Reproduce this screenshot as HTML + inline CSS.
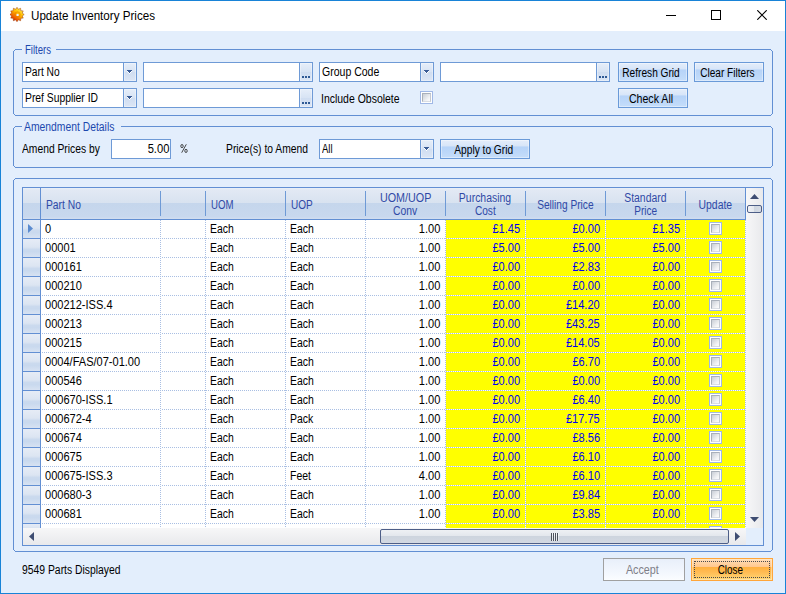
<!DOCTYPE html><html><head><meta charset="utf-8"><style>
*{box-sizing:border-box;margin:0;padding:0}
html,body{width:786px;height:594px;overflow:hidden;background:#E3EEFC}
body{position:relative;font-family:"Liberation Sans",sans-serif;font-size:12px;color:#000}
.a{position:absolute}
.t{position:absolute;white-space:nowrap;line-height:14px;font-size:12px}
.tb{position:absolute;background:#fff;border:1px solid #6E9AD6}
.dd{position:absolute;background:linear-gradient(#E6EEF9,#D7E3F4 50%,#CFDDF1 51%,#DCE6F5);box-shadow:inset 0 0 0 1px rgba(255,255,255,0.35)}
.btn{position:absolute;border:1px solid #6A9AD8;background:linear-gradient(#E4EDFA 0%,#D7E5F8 35%,#B6D3F8 37%,#BDD8F9 70%,#C6DEFA 100%);box-shadow:inset 0 0 0 1px rgba(255,255,255,0.4)}
.hdr{position:absolute;background:linear-gradient(#EAF0F8 0px,#E2E9F4 2px,#D8E2F0 48%,#C5D6EC 50%,#C8D8EE 92%,#D2DEF0 100%)}
.rh{position:absolute;background:linear-gradient(#E6ECF6 0%,#DCE5F2 45%,#CBDAEE 58%,#C9D9EE 70%,#D7E2F2 100%)}
.sep{position:absolute;width:1px;background:#6E9AD6}
.hl{position:absolute;height:1px;background-color:#fff;background-image:linear-gradient(to right,#A9BFE3 50%,transparent 50%);background-size:2px 1px;background-position:1px 0}
.vl{position:absolute;width:1px;background-color:#fff;background-image:linear-gradient(#A9BFE3 50%,transparent 50%);background-size:1px 2px}
.cb{position:absolute;width:13px;height:13px;border:1px solid #A0B8E6;background:#fff}
.cb i{position:absolute;left:1px;top:1px;width:9px;height:9px;border:1px solid;border-color:#A9B0BA #C4C9D1 #D9DDE3 #A9B0BA;background:linear-gradient(135deg,#C9CED6,#F4F5F7 75%,#FBFBFC)}
</style></head><body>
<div class="a" style="left:0;top:0;width:786px;height:594px;border:1px solid #1883D7"></div>
<div class="a" style="left:1px;top:1px;width:784px;height:30px;background:#fff"></div>
<svg class="a" style="left:10px;top:7px" width="15" height="15" viewBox="0 0 15 15">
<defs><linearGradient id="ig" x1="0.85" y1="0.05" x2="0.2" y2="0.95"><stop offset="0" stop-color="#FFF060"/><stop offset="0.4" stop-color="#FFC000"/><stop offset="0.75" stop-color="#F06000"/><stop offset="1" stop-color="#C82000"/></linearGradient></defs>
<path d="M7.00 0.30 L8.40 2.28 L10.60 1.26 L10.82 3.68 L13.24 3.90 L12.22 6.10 L14.20 7.50 L12.22 8.90 L13.24 11.10 L10.82 11.32 L10.60 13.74 L8.40 12.72 L7.00 14.70 L5.60 12.72 L3.40 13.74 L3.18 11.32 L0.76 11.10 L1.78 8.90 L-0.20 7.50 L1.78 6.10 L0.76 3.90 L3.18 3.68 L3.40 1.26 L5.60 2.28 Z" fill="url(#ig)" stroke="#9A3A08" stroke-width="0.5"/>
<circle cx="7.5" cy="7.5" r="2.6" fill="none" stroke="#E86A00" stroke-width="0.8" opacity="0.6"/>
<circle cx="7.6" cy="7.9" r="1.2" fill="#EAF2FF"/>
</svg>
<div class="a" style="left:666px;top:15px;width:10px;height:1px;background:#000"></div>
<div class="a" style="left:711px;top:10px;width:10px;height:10px;border:1px solid #000"></div>
<svg class="a" style="left:757px;top:10px" width="10" height="10" viewBox="0 0 10 10"><path d="M0.3 0.3 L9.7 9.7 M9.7 0.3 L0.3 9.7" stroke="#000" stroke-width="1.15"/></svg>
<div class="a" style="left:15px;top:49px;width:7px;height:1px;background:#628FD3"></div>
<div class="a" style="left:56px;top:49px;width:715px;height:1px;background:#628FD3"></div>
<div class="a" style="left:15px;top:115px;width:756px;height:1px;background:#628FD3"></div>
<div class="a" style="left:13px;top:51px;width:1px;height:63px;background:#628FD3"></div>
<div class="a" style="left:772px;top:51px;width:1px;height:63px;background:#628FD3"></div>
<div class="a" style="left:14px;top:50px;width:1px;height:1px;background:#628FD3"></div>
<div class="a" style="left:771px;top:50px;width:1px;height:1px;background:#628FD3"></div>
<div class="a" style="left:14px;top:114px;width:1px;height:1px;background:#628FD3"></div>
<div class="a" style="left:771px;top:114px;width:1px;height:1px;background:#628FD3"></div>
<div class="a" style="left:15px;top:126px;width:7px;height:1px;background:#628FD3"></div>
<div class="a" style="left:121px;top:126px;width:650px;height:1px;background:#628FD3"></div>
<div class="a" style="left:15px;top:167px;width:756px;height:1px;background:#628FD3"></div>
<div class="a" style="left:13px;top:128px;width:1px;height:38px;background:#628FD3"></div>
<div class="a" style="left:772px;top:128px;width:1px;height:38px;background:#628FD3"></div>
<div class="a" style="left:14px;top:127px;width:1px;height:1px;background:#628FD3"></div>
<div class="a" style="left:771px;top:127px;width:1px;height:1px;background:#628FD3"></div>
<div class="a" style="left:14px;top:166px;width:1px;height:1px;background:#628FD3"></div>
<div class="a" style="left:771px;top:166px;width:1px;height:1px;background:#628FD3"></div>
<div class="a" style="left:15px;top:178px;width:756px;height:1px;background:#628FD3"></div>
<div class="a" style="left:15px;top:551px;width:756px;height:1px;background:#628FD3"></div>
<div class="a" style="left:13px;top:180px;width:1px;height:370px;background:#628FD3"></div>
<div class="a" style="left:772px;top:180px;width:1px;height:370px;background:#628FD3"></div>
<div class="a" style="left:14px;top:179px;width:1px;height:1px;background:#628FD3"></div>
<div class="a" style="left:771px;top:179px;width:1px;height:1px;background:#628FD3"></div>
<div class="a" style="left:14px;top:550px;width:1px;height:1px;background:#628FD3"></div>
<div class="a" style="left:771px;top:550px;width:1px;height:1px;background:#628FD3"></div>
<div class="tb" style="left:22px;top:62px;width:115px;height:20px"></div>
<div class="a" style="left:123px;top:63px;width:1px;height:18px;background:#6E9AD6"></div>
<div class="dd" style="left:124px;top:63px;width:12px;height:18px"></div>
<svg class="a" style="left:127px;top:70px" width="6" height="5" shape-rendering="crispEdges"><path d="M0 0 H5 V1 H4 V2 H3 V3 H2 V2 H1 V1 H0 Z" fill="#3A5C96"/><path d="M0 1 H1 V2 H2 V3 H3 V2 H4 V1 H5 V2 H4 V3 H3 V4 H2 V3 H1 V2 H0 Z" fill="#fff"/></svg>
<div class="tb" style="left:143px;top:62px;width:170px;height:20px"></div>
<div class="a" style="left:299px;top:63px;width:1px;height:18px;background:#6E9AD6"></div>
<div class="dd" style="left:300px;top:63px;width:12px;height:18px"></div>
<div class="a" style="left:302px;top:76px;width:2px;height:2px;background:#2F5A95"></div>
<div class="a" style="left:305px;top:76px;width:2px;height:2px;background:#2F5A95"></div>
<div class="a" style="left:308px;top:76px;width:2px;height:2px;background:#2F5A95"></div>
<div class="tb" style="left:319px;top:62px;width:115px;height:20px"></div>
<div class="a" style="left:420px;top:63px;width:1px;height:18px;background:#6E9AD6"></div>
<div class="dd" style="left:421px;top:63px;width:12px;height:18px"></div>
<svg class="a" style="left:424px;top:70px" width="6" height="5" shape-rendering="crispEdges"><path d="M0 0 H5 V1 H4 V2 H3 V3 H2 V2 H1 V1 H0 Z" fill="#3A5C96"/><path d="M0 1 H1 V2 H2 V3 H3 V2 H4 V1 H5 V2 H4 V3 H3 V4 H2 V3 H1 V2 H0 Z" fill="#fff"/></svg>
<div class="tb" style="left:440px;top:62px;width:170px;height:20px"></div>
<div class="a" style="left:596px;top:63px;width:1px;height:18px;background:#6E9AD6"></div>
<div class="dd" style="left:597px;top:63px;width:12px;height:18px"></div>
<div class="a" style="left:599px;top:76px;width:2px;height:2px;background:#2F5A95"></div>
<div class="a" style="left:602px;top:76px;width:2px;height:2px;background:#2F5A95"></div>
<div class="a" style="left:605px;top:76px;width:2px;height:2px;background:#2F5A95"></div>
<div class="btn" style="left:618px;top:62px;width:70px;height:20px"></div>
<div class="btn" style="left:694px;top:62px;width:70px;height:20px"></div>
<div class="tb" style="left:22px;top:88px;width:115px;height:20px"></div>
<div class="a" style="left:123px;top:89px;width:1px;height:18px;background:#6E9AD6"></div>
<div class="dd" style="left:124px;top:89px;width:12px;height:18px"></div>
<svg class="a" style="left:127px;top:96px" width="6" height="5" shape-rendering="crispEdges"><path d="M0 0 H5 V1 H4 V2 H3 V3 H2 V2 H1 V1 H0 Z" fill="#3A5C96"/><path d="M0 1 H1 V2 H2 V3 H3 V2 H4 V1 H5 V2 H4 V3 H3 V4 H2 V3 H1 V2 H0 Z" fill="#fff"/></svg>
<div class="tb" style="left:143px;top:88px;width:170px;height:20px"></div>
<div class="a" style="left:299px;top:89px;width:1px;height:18px;background:#6E9AD6"></div>
<div class="dd" style="left:300px;top:89px;width:12px;height:18px"></div>
<div class="a" style="left:302px;top:102px;width:2px;height:2px;background:#2F5A95"></div>
<div class="a" style="left:305px;top:102px;width:2px;height:2px;background:#2F5A95"></div>
<div class="a" style="left:308px;top:102px;width:2px;height:2px;background:#2F5A95"></div>
<div class="cb" style="left:420px;top:91px"><i></i></div>
<div class="btn" style="left:618px;top:88px;width:70px;height:20px"></div>
<div class="tb" style="left:111px;top:139px;width:60px;height:20px"></div>
<svg class="a" style="left:180px;top:144px" width="8" height="9" viewBox="0 0 8 9"><ellipse cx="2" cy="2.1" rx="1.2" ry="1.6" fill="none" stroke="#333" stroke-width="0.9"/><ellipse cx="6" cy="6.9" rx="1.2" ry="1.6" fill="none" stroke="#333" stroke-width="0.9"/><path d="M6.3 0.3 L1.7 8.7" stroke="#333" stroke-width="0.9"/></svg>
<div class="tb" style="left:319px;top:139px;width:115px;height:20px"></div>
<div class="a" style="left:420px;top:140px;width:1px;height:18px;background:#6E9AD6"></div>
<div class="dd" style="left:421px;top:140px;width:12px;height:18px"></div>
<svg class="a" style="left:424px;top:147px" width="6" height="5" shape-rendering="crispEdges"><path d="M0 0 H5 V1 H4 V2 H3 V3 H2 V2 H1 V1 H0 Z" fill="#3A5C96"/><path d="M0 1 H1 V2 H2 V3 H3 V2 H4 V1 H5 V2 H4 V3 H3 V4 H2 V3 H1 V2 H0 Z" fill="#fff"/></svg>
<div class="btn" style="left:440px;top:139px;width:90px;height:20px"></div>
<div class="a" style="left:22px;top:187px;width:742px;height:359px;border:1px solid #628FD3;background:#fff"></div>
<div class="hdr" style="left:23px;top:188px;width:723px;height:31px"></div>
<div class="a" style="left:23px;top:219px;width:723px;height:1px;background:#628FD3"></div>
<div class="sep" style="left:160px;top:191px;height:25px"></div>
<div class="sep" style="left:205px;top:191px;height:25px"></div>
<div class="sep" style="left:285px;top:191px;height:25px"></div>
<div class="sep" style="left:365px;top:191px;height:25px"></div>
<div class="sep" style="left:445px;top:191px;height:25px"></div>
<div class="sep" style="left:525px;top:191px;height:25px"></div>
<div class="sep" style="left:605px;top:191px;height:25px"></div>
<div class="sep" style="left:685px;top:191px;height:25px"></div>
<div class="a" style="left:745px;top:188px;width:1px;height:31px;background:#628FD3"></div>
<div class="a" style="left:40px;top:188px;width:1px;height:340px;background:#628FD3"></div>
<div class="a" style="left:446px;top:220px;width:300px;height:308px;background:#FFFF00"></div>
<div class="rh" style="left:23px;top:220px;width:17px;height:18px"></div>
<div class="a" style="left:23px;top:238px;width:17px;height:1px;background:#628FD3"></div>
<div class="hl" style="left:41px;top:238px;width:705px"></div>
<div class="cb" style="left:709px;top:222px"><i></i></div>
<div class="rh" style="left:23px;top:239px;width:17px;height:18px"></div>
<div class="a" style="left:23px;top:257px;width:17px;height:1px;background:#628FD3"></div>
<div class="hl" style="left:41px;top:257px;width:705px"></div>
<div class="cb" style="left:709px;top:241px"><i></i></div>
<div class="rh" style="left:23px;top:258px;width:17px;height:18px"></div>
<div class="a" style="left:23px;top:276px;width:17px;height:1px;background:#628FD3"></div>
<div class="hl" style="left:41px;top:276px;width:705px"></div>
<div class="cb" style="left:709px;top:260px"><i></i></div>
<div class="rh" style="left:23px;top:277px;width:17px;height:18px"></div>
<div class="a" style="left:23px;top:295px;width:17px;height:1px;background:#628FD3"></div>
<div class="hl" style="left:41px;top:295px;width:705px"></div>
<div class="cb" style="left:709px;top:279px"><i></i></div>
<div class="rh" style="left:23px;top:296px;width:17px;height:18px"></div>
<div class="a" style="left:23px;top:314px;width:17px;height:1px;background:#628FD3"></div>
<div class="hl" style="left:41px;top:314px;width:705px"></div>
<div class="cb" style="left:709px;top:298px"><i></i></div>
<div class="rh" style="left:23px;top:315px;width:17px;height:18px"></div>
<div class="a" style="left:23px;top:333px;width:17px;height:1px;background:#628FD3"></div>
<div class="hl" style="left:41px;top:333px;width:705px"></div>
<div class="cb" style="left:709px;top:317px"><i></i></div>
<div class="rh" style="left:23px;top:334px;width:17px;height:18px"></div>
<div class="a" style="left:23px;top:352px;width:17px;height:1px;background:#628FD3"></div>
<div class="hl" style="left:41px;top:352px;width:705px"></div>
<div class="cb" style="left:709px;top:336px"><i></i></div>
<div class="rh" style="left:23px;top:353px;width:17px;height:18px"></div>
<div class="a" style="left:23px;top:371px;width:17px;height:1px;background:#628FD3"></div>
<div class="hl" style="left:41px;top:371px;width:705px"></div>
<div class="cb" style="left:709px;top:355px"><i></i></div>
<div class="rh" style="left:23px;top:372px;width:17px;height:18px"></div>
<div class="a" style="left:23px;top:390px;width:17px;height:1px;background:#628FD3"></div>
<div class="hl" style="left:41px;top:390px;width:705px"></div>
<div class="cb" style="left:709px;top:374px"><i></i></div>
<div class="rh" style="left:23px;top:391px;width:17px;height:18px"></div>
<div class="a" style="left:23px;top:409px;width:17px;height:1px;background:#628FD3"></div>
<div class="hl" style="left:41px;top:409px;width:705px"></div>
<div class="cb" style="left:709px;top:393px"><i></i></div>
<div class="rh" style="left:23px;top:410px;width:17px;height:18px"></div>
<div class="a" style="left:23px;top:428px;width:17px;height:1px;background:#628FD3"></div>
<div class="hl" style="left:41px;top:428px;width:705px"></div>
<div class="cb" style="left:709px;top:412px"><i></i></div>
<div class="rh" style="left:23px;top:429px;width:17px;height:18px"></div>
<div class="a" style="left:23px;top:447px;width:17px;height:1px;background:#628FD3"></div>
<div class="hl" style="left:41px;top:447px;width:705px"></div>
<div class="cb" style="left:709px;top:431px"><i></i></div>
<div class="rh" style="left:23px;top:448px;width:17px;height:18px"></div>
<div class="a" style="left:23px;top:466px;width:17px;height:1px;background:#628FD3"></div>
<div class="hl" style="left:41px;top:466px;width:705px"></div>
<div class="cb" style="left:709px;top:450px"><i></i></div>
<div class="rh" style="left:23px;top:467px;width:17px;height:18px"></div>
<div class="a" style="left:23px;top:485px;width:17px;height:1px;background:#628FD3"></div>
<div class="hl" style="left:41px;top:485px;width:705px"></div>
<div class="cb" style="left:709px;top:469px"><i></i></div>
<div class="rh" style="left:23px;top:486px;width:17px;height:18px"></div>
<div class="a" style="left:23px;top:504px;width:17px;height:1px;background:#628FD3"></div>
<div class="hl" style="left:41px;top:504px;width:705px"></div>
<div class="cb" style="left:709px;top:488px"><i></i></div>
<div class="rh" style="left:23px;top:505px;width:17px;height:18px"></div>
<div class="a" style="left:23px;top:523px;width:17px;height:1px;background:#628FD3"></div>
<div class="hl" style="left:41px;top:523px;width:705px"></div>
<div class="cb" style="left:709px;top:507px"><i></i></div>
<div class="rh" style="left:23px;top:524px;width:17px;height:8px"></div>
<div class="cb" style="left:709px;top:526px"><i></i></div>
<div class="vl" style="left:160px;top:220px;height:308px"></div>
<div class="vl" style="left:205px;top:220px;height:308px"></div>
<div class="vl" style="left:285px;top:220px;height:308px"></div>
<div class="vl" style="left:365px;top:220px;height:308px"></div>
<div class="vl" style="left:445px;top:220px;height:308px"></div>
<div class="vl" style="left:525px;top:220px;height:308px"></div>
<div class="vl" style="left:605px;top:220px;height:308px"></div>
<div class="vl" style="left:685px;top:220px;height:308px"></div>
<div class="vl" style="left:745px;top:220px;height:308px"></div>
<svg class="a" style="left:28px;top:224px" width="6" height="9"><path d="M0 0 L5 4.5 L0 9 Z" fill="#5B8BCF"/></svg>
<div class="a" style="left:746px;top:188px;width:17px;height:340px;background:linear-gradient(to right,#F7F7F8,#E8E9EC)"></div>
<svg class="a" style="left:750px;top:194px" width="9" height="5"><path d="M0 5 L4.5 0 L9 5 Z" fill="#3F4D72"/></svg>
<div class="a" style="left:747px;top:205px;width:15px;height:8px;border:1px solid #4D5E87;border-radius:2px;background:linear-gradient(to right,#F0F2F6 0%,#E4E8EE 45%,#CFD6E0 50%,#D6DCE5 100%)"></div>
<svg class="a" style="left:750px;top:517px" width="9" height="5"><path d="M0 0 L9 0 L4.5 5 Z" fill="#3F4D72"/></svg>
<div class="a" style="left:23px;top:528px;width:723px;height:17px;background:linear-gradient(#F7F7F8,#E8E9EC)"></div>
<div class="a" style="left:746px;top:528px;width:17px;height:17px;background:#E3EEFC"></div>
<svg class="a" style="left:29px;top:532px" width="5" height="9"><path d="M5 0 L0 4.5 L5 9 Z" fill="#3F4D72"/></svg>
<svg class="a" style="left:735px;top:532px" width="5" height="9"><path d="M0 0 L5 4.5 L0 9 Z" fill="#3F4D72"/></svg>
<div class="a" style="left:380px;top:529px;width:349px;height:15px;border:1px solid #4D5E87;border-radius:2px;background:linear-gradient(#EEF0F4 0%,#E3E7ED 45%,#CDD4DE 50%,#D3D9E2 100%)"></div>
<div class="a" style="left:551px;top:533px;width:1px;height:8px;background:#4E535E"></div>
<div class="a" style="left:552px;top:533px;width:1px;height:8px;background:rgba(255,255,255,0.5)"></div>
<div class="a" style="left:553px;top:533px;width:1px;height:8px;background:#4E535E"></div>
<div class="a" style="left:554px;top:533px;width:1px;height:8px;background:rgba(255,255,255,0.5)"></div>
<div class="a" style="left:555px;top:533px;width:1px;height:8px;background:#4E535E"></div>
<div class="a" style="left:556px;top:533px;width:1px;height:8px;background:rgba(255,255,255,0.5)"></div>
<div class="a" style="left:557px;top:533px;width:1px;height:8px;background:#4E535E"></div>
<div class="a" style="left:558px;top:533px;width:1px;height:8px;background:rgba(255,255,255,0.5)"></div>
<div class="a" style="left:603px;top:558px;width:82px;height:23px;border:1px solid #A0A0A0;background:linear-gradient(#E8EFFA,#F4F8FE 70%,#FBFDFF)"></div>
<div class="a" style="left:691px;top:558px;width:82px;height:23px;border:1px solid #FFA53A;background:linear-gradient(#FFDDB8 0%,#FFC88F 37%,#FFB03F 39%,#FFBD55 65%,#FFD777 100%);box-shadow:inset 0 0 0 1px rgba(255,240,210,0.5)"></div>
<div class="a" style="left:694px;top:561px;width:76px;height:17px;border:1px dotted #4A4A4A"></div>
<div class="t" style="left:31px;transform-origin:0 0;top:9px;color:#000;transform:scaleX(0.9683)">Update Inventory Prices</div>
<div class="t" style="left:24.5px;transform-origin:0 0;top:43px;color:#1C48AE;transform:scaleX(0.7958)">Filters</div>
<div class="t" style="left:24px;transform-origin:0 0;top:120px;color:#1C48AE;transform:scaleX(0.8633)">Amendment Details</div>
<div class="t" style="left:25px;transform-origin:0 0;top:65px;color:#000;transform:scaleX(0.8528)">Part No</div>
<div class="t" style="left:322px;transform-origin:0 0;top:65px;color:#000;transform:scaleX(0.8765)">Group Code</div>
<div class="t" style="left:617.48px;transform-origin:34.02px 0;top:66px;color:#000;transform:scaleX(0.8452)">Refresh Grid</div>
<div class="t" style="left:695.16px;transform-origin:32.34px 0;top:66px;color:#000;transform:scaleX(0.8410)">Clear Filters</div>
<div class="t" style="left:25px;transform-origin:0 0;top:91px;color:#000;transform:scaleX(0.8618)">Pref Supplier ID</div>
<div class="t" style="left:321px;transform-origin:0 0;top:92px;color:#000;transform:scaleX(0.8727)">Include Obsolete</div>
<div class="t" style="left:626.48px;transform-origin:25.02px 0;top:92px;color:#000;transform:scaleX(0.8834)">Check All</div>
<div class="t" style="left:22px;transform-origin:0 0;top:142px;color:#000;transform:scaleX(0.8577)">Amend Prices by</div>
<div class="t" style="left:145.640625px;transform-origin:23.359375px 0;top:142px;color:#000;transform:scaleX(0.9290)">5.00</div>
<div class="t" style="left:226px;transform-origin:0 0;top:142px;color:#000;transform:scaleX(0.8598)">Price(s) to Amend</div>
<div class="t" style="left:322px;transform-origin:0 0;top:142px;color:#000;transform:scaleX(0.7869)">All</div>
<div class="t" style="left:448.81px;transform-origin:34.69px 0;top:143px;color:#000;transform:scaleX(0.8476)">Apply to Grid</div>
<div class="t" style="left:46px;transform-origin:0 0;top:198px;color:#2F49A6;transform:scaleX(0.8578)">Part No</div>
<div class="t" style="left:211px;transform-origin:0 0;top:198px;color:#2F49A6;transform:scaleX(0.8036)">UOM</div>
<div class="t" style="left:291px;transform-origin:0 0;top:198px;color:#2F49A6;transform:scaleX(0.8341)">UOP</div>
<div class="t" style="left:376.83px;transform-origin:28.67px 0;top:191px;color:#2F49A6;transform:scaleX(0.8963)">UOM/UOP</div>
<div class="t" style="left:391.49px;transform-origin:14.01px 0;top:204px;color:#2F49A6;transform:scaleX(0.8638)">Conv</div>
<div class="t" style="left:455.48px;transform-origin:30.02px 0;top:191px;color:#2F49A6;transform:scaleX(0.8710)">Purchasing</div>
<div class="t" style="left:473.16px;transform-origin:12.34px 0;top:204px;color:#2F49A6;transform:scaleX(0.8425)">Cost</div>
<div class="t" style="left:532.15px;transform-origin:33.35px 0;top:198px;color:#2F49A6;transform:scaleX(0.8455)">Selling Price</div>
<div class="t" style="left:621.15px;transform-origin:24.35px 0;top:191px;color:#2F49A6;transform:scaleX(0.8665)">Standard</div>
<div class="t" style="left:631.83px;transform-origin:13.67px 0;top:204px;color:#2F49A6;transform:scaleX(0.8338)">Price</div>
<div class="t" style="left:696.15px;transform-origin:19.35px 0;top:198px;color:#2F49A6;transform:scaleX(0.8681)">Update</div>
<div class="t" style="left:45px;transform-origin:0 0;top:222px;color:#000;transform:scaleX(0.9200)">0</div>
<div class="t" style="left:210px;transform-origin:0 0;top:222px;color:#000;transform:scaleX(0.8662)">Each</div>
<div class="t" style="left:290px;transform-origin:0 0;top:222px;color:#000;transform:scaleX(0.8700)">Each</div>
<div class="t" style="left:416.640625px;transform-origin:23.359375px 0;top:222px;color:#000;transform:scaleX(0.9200)">1.00</div>
<div class="t" style="left:489.96875px;transform-origin:30.03125px 0;top:222px;color:#0000F0;transform:scaleX(0.9200)">£1.45</div>
<div class="t" style="left:569.96875px;transform-origin:30.03125px 0;top:222px;color:#0000F0;transform:scaleX(0.9200)">£0.00</div>
<div class="t" style="left:649.96875px;transform-origin:30.03125px 0;top:222px;color:#0000F0;transform:scaleX(0.9200)">£1.35</div>
<div class="t" style="left:45px;transform-origin:0 0;top:241px;color:#000;transform:scaleX(0.9200)">00001</div>
<div class="t" style="left:210px;transform-origin:0 0;top:241px;color:#000;transform:scaleX(0.8662)">Each</div>
<div class="t" style="left:290px;transform-origin:0 0;top:241px;color:#000;transform:scaleX(0.8700)">Each</div>
<div class="t" style="left:416.640625px;transform-origin:23.359375px 0;top:241px;color:#000;transform:scaleX(0.9200)">1.00</div>
<div class="t" style="left:489.96875px;transform-origin:30.03125px 0;top:241px;color:#0000F0;transform:scaleX(0.9200)">£5.00</div>
<div class="t" style="left:569.96875px;transform-origin:30.03125px 0;top:241px;color:#0000F0;transform:scaleX(0.9200)">£5.00</div>
<div class="t" style="left:649.96875px;transform-origin:30.03125px 0;top:241px;color:#0000F0;transform:scaleX(0.9200)">£5.00</div>
<div class="t" style="left:45px;transform-origin:0 0;top:260px;color:#000;transform:scaleX(0.9200)">000161</div>
<div class="t" style="left:210px;transform-origin:0 0;top:260px;color:#000;transform:scaleX(0.8662)">Each</div>
<div class="t" style="left:290px;transform-origin:0 0;top:260px;color:#000;transform:scaleX(0.8700)">Each</div>
<div class="t" style="left:416.640625px;transform-origin:23.359375px 0;top:260px;color:#000;transform:scaleX(0.9200)">1.00</div>
<div class="t" style="left:489.96875px;transform-origin:30.03125px 0;top:260px;color:#0000F0;transform:scaleX(0.9200)">£0.00</div>
<div class="t" style="left:569.96875px;transform-origin:30.03125px 0;top:260px;color:#0000F0;transform:scaleX(0.9200)">£2.83</div>
<div class="t" style="left:649.96875px;transform-origin:30.03125px 0;top:260px;color:#0000F0;transform:scaleX(0.9200)">£0.00</div>
<div class="t" style="left:45px;transform-origin:0 0;top:279px;color:#000;transform:scaleX(0.9200)">000210</div>
<div class="t" style="left:210px;transform-origin:0 0;top:279px;color:#000;transform:scaleX(0.8662)">Each</div>
<div class="t" style="left:290px;transform-origin:0 0;top:279px;color:#000;transform:scaleX(0.8700)">Each</div>
<div class="t" style="left:416.640625px;transform-origin:23.359375px 0;top:279px;color:#000;transform:scaleX(0.9200)">1.00</div>
<div class="t" style="left:489.96875px;transform-origin:30.03125px 0;top:279px;color:#0000F0;transform:scaleX(0.9200)">£0.00</div>
<div class="t" style="left:569.96875px;transform-origin:30.03125px 0;top:279px;color:#0000F0;transform:scaleX(0.9200)">£0.00</div>
<div class="t" style="left:649.96875px;transform-origin:30.03125px 0;top:279px;color:#0000F0;transform:scaleX(0.9200)">£0.00</div>
<div class="t" style="left:45px;transform-origin:0 0;top:298px;color:#000;transform:scaleX(0.9200)">000212-ISS.4</div>
<div class="t" style="left:210px;transform-origin:0 0;top:298px;color:#000;transform:scaleX(0.8662)">Each</div>
<div class="t" style="left:290px;transform-origin:0 0;top:298px;color:#000;transform:scaleX(0.8700)">Each</div>
<div class="t" style="left:416.640625px;transform-origin:23.359375px 0;top:298px;color:#000;transform:scaleX(0.9200)">1.00</div>
<div class="t" style="left:489.96875px;transform-origin:30.03125px 0;top:298px;color:#0000F0;transform:scaleX(0.9200)">£0.00</div>
<div class="t" style="left:563.296875px;transform-origin:36.703125px 0;top:298px;color:#0000F0;transform:scaleX(0.9200)">£14.20</div>
<div class="t" style="left:649.96875px;transform-origin:30.03125px 0;top:298px;color:#0000F0;transform:scaleX(0.9200)">£0.00</div>
<div class="t" style="left:45px;transform-origin:0 0;top:317px;color:#000;transform:scaleX(0.9200)">000213</div>
<div class="t" style="left:210px;transform-origin:0 0;top:317px;color:#000;transform:scaleX(0.8662)">Each</div>
<div class="t" style="left:290px;transform-origin:0 0;top:317px;color:#000;transform:scaleX(0.8700)">Each</div>
<div class="t" style="left:416.640625px;transform-origin:23.359375px 0;top:317px;color:#000;transform:scaleX(0.9200)">1.00</div>
<div class="t" style="left:489.96875px;transform-origin:30.03125px 0;top:317px;color:#0000F0;transform:scaleX(0.9200)">£0.00</div>
<div class="t" style="left:563.296875px;transform-origin:36.703125px 0;top:317px;color:#0000F0;transform:scaleX(0.9200)">£43.25</div>
<div class="t" style="left:649.96875px;transform-origin:30.03125px 0;top:317px;color:#0000F0;transform:scaleX(0.9200)">£0.00</div>
<div class="t" style="left:45px;transform-origin:0 0;top:336px;color:#000;transform:scaleX(0.9200)">000215</div>
<div class="t" style="left:210px;transform-origin:0 0;top:336px;color:#000;transform:scaleX(0.8662)">Each</div>
<div class="t" style="left:290px;transform-origin:0 0;top:336px;color:#000;transform:scaleX(0.8700)">Each</div>
<div class="t" style="left:416.640625px;transform-origin:23.359375px 0;top:336px;color:#000;transform:scaleX(0.9200)">1.00</div>
<div class="t" style="left:489.96875px;transform-origin:30.03125px 0;top:336px;color:#0000F0;transform:scaleX(0.9200)">£0.00</div>
<div class="t" style="left:563.296875px;transform-origin:36.703125px 0;top:336px;color:#0000F0;transform:scaleX(0.9200)">£14.05</div>
<div class="t" style="left:649.96875px;transform-origin:30.03125px 0;top:336px;color:#0000F0;transform:scaleX(0.9200)">£0.00</div>
<div class="t" style="left:45px;transform-origin:0 0;top:355px;color:#000;transform:scaleX(0.9200)">0004/FAS/07-01.00</div>
<div class="t" style="left:210px;transform-origin:0 0;top:355px;color:#000;transform:scaleX(0.8662)">Each</div>
<div class="t" style="left:290px;transform-origin:0 0;top:355px;color:#000;transform:scaleX(0.8700)">Each</div>
<div class="t" style="left:416.640625px;transform-origin:23.359375px 0;top:355px;color:#000;transform:scaleX(0.9200)">1.00</div>
<div class="t" style="left:489.96875px;transform-origin:30.03125px 0;top:355px;color:#0000F0;transform:scaleX(0.9200)">£0.00</div>
<div class="t" style="left:569.96875px;transform-origin:30.03125px 0;top:355px;color:#0000F0;transform:scaleX(0.9200)">£6.70</div>
<div class="t" style="left:649.96875px;transform-origin:30.03125px 0;top:355px;color:#0000F0;transform:scaleX(0.9200)">£0.00</div>
<div class="t" style="left:45px;transform-origin:0 0;top:374px;color:#000;transform:scaleX(0.9200)">000546</div>
<div class="t" style="left:210px;transform-origin:0 0;top:374px;color:#000;transform:scaleX(0.8662)">Each</div>
<div class="t" style="left:290px;transform-origin:0 0;top:374px;color:#000;transform:scaleX(0.8700)">Each</div>
<div class="t" style="left:416.640625px;transform-origin:23.359375px 0;top:374px;color:#000;transform:scaleX(0.9200)">1.00</div>
<div class="t" style="left:489.96875px;transform-origin:30.03125px 0;top:374px;color:#0000F0;transform:scaleX(0.9200)">£0.00</div>
<div class="t" style="left:569.96875px;transform-origin:30.03125px 0;top:374px;color:#0000F0;transform:scaleX(0.9200)">£0.00</div>
<div class="t" style="left:649.96875px;transform-origin:30.03125px 0;top:374px;color:#0000F0;transform:scaleX(0.9200)">£0.00</div>
<div class="t" style="left:45px;transform-origin:0 0;top:393px;color:#000;transform:scaleX(0.9200)">000670-ISS.1</div>
<div class="t" style="left:210px;transform-origin:0 0;top:393px;color:#000;transform:scaleX(0.8662)">Each</div>
<div class="t" style="left:290px;transform-origin:0 0;top:393px;color:#000;transform:scaleX(0.8700)">Each</div>
<div class="t" style="left:416.640625px;transform-origin:23.359375px 0;top:393px;color:#000;transform:scaleX(0.9200)">1.00</div>
<div class="t" style="left:489.96875px;transform-origin:30.03125px 0;top:393px;color:#0000F0;transform:scaleX(0.9200)">£0.00</div>
<div class="t" style="left:569.96875px;transform-origin:30.03125px 0;top:393px;color:#0000F0;transform:scaleX(0.9200)">£6.40</div>
<div class="t" style="left:649.96875px;transform-origin:30.03125px 0;top:393px;color:#0000F0;transform:scaleX(0.9200)">£0.00</div>
<div class="t" style="left:45px;transform-origin:0 0;top:412px;color:#000;transform:scaleX(0.9200)">000672-4</div>
<div class="t" style="left:210px;transform-origin:0 0;top:412px;color:#000;transform:scaleX(0.8662)">Each</div>
<div class="t" style="left:290px;transform-origin:0 0;top:412px;color:#000;transform:scaleX(0.8700)">Pack</div>
<div class="t" style="left:416.640625px;transform-origin:23.359375px 0;top:412px;color:#000;transform:scaleX(0.9200)">1.00</div>
<div class="t" style="left:489.96875px;transform-origin:30.03125px 0;top:412px;color:#0000F0;transform:scaleX(0.9200)">£0.00</div>
<div class="t" style="left:563.296875px;transform-origin:36.703125px 0;top:412px;color:#0000F0;transform:scaleX(0.9200)">£17.75</div>
<div class="t" style="left:649.96875px;transform-origin:30.03125px 0;top:412px;color:#0000F0;transform:scaleX(0.9200)">£0.00</div>
<div class="t" style="left:45px;transform-origin:0 0;top:431px;color:#000;transform:scaleX(0.9200)">000674</div>
<div class="t" style="left:210px;transform-origin:0 0;top:431px;color:#000;transform:scaleX(0.8662)">Each</div>
<div class="t" style="left:290px;transform-origin:0 0;top:431px;color:#000;transform:scaleX(0.8700)">Each</div>
<div class="t" style="left:416.640625px;transform-origin:23.359375px 0;top:431px;color:#000;transform:scaleX(0.9200)">1.00</div>
<div class="t" style="left:489.96875px;transform-origin:30.03125px 0;top:431px;color:#0000F0;transform:scaleX(0.9200)">£0.00</div>
<div class="t" style="left:569.96875px;transform-origin:30.03125px 0;top:431px;color:#0000F0;transform:scaleX(0.9200)">£8.56</div>
<div class="t" style="left:649.96875px;transform-origin:30.03125px 0;top:431px;color:#0000F0;transform:scaleX(0.9200)">£0.00</div>
<div class="t" style="left:45px;transform-origin:0 0;top:450px;color:#000;transform:scaleX(0.9200)">000675</div>
<div class="t" style="left:210px;transform-origin:0 0;top:450px;color:#000;transform:scaleX(0.8662)">Each</div>
<div class="t" style="left:290px;transform-origin:0 0;top:450px;color:#000;transform:scaleX(0.8700)">Each</div>
<div class="t" style="left:416.640625px;transform-origin:23.359375px 0;top:450px;color:#000;transform:scaleX(0.9200)">1.00</div>
<div class="t" style="left:489.96875px;transform-origin:30.03125px 0;top:450px;color:#0000F0;transform:scaleX(0.9200)">£0.00</div>
<div class="t" style="left:569.96875px;transform-origin:30.03125px 0;top:450px;color:#0000F0;transform:scaleX(0.9200)">£6.10</div>
<div class="t" style="left:649.96875px;transform-origin:30.03125px 0;top:450px;color:#0000F0;transform:scaleX(0.9200)">£0.00</div>
<div class="t" style="left:45px;transform-origin:0 0;top:469px;color:#000;transform:scaleX(0.9200)">000675-ISS.3</div>
<div class="t" style="left:210px;transform-origin:0 0;top:469px;color:#000;transform:scaleX(0.8662)">Each</div>
<div class="t" style="left:290px;transform-origin:0 0;top:469px;color:#000;transform:scaleX(0.8700)">Feet</div>
<div class="t" style="left:416.640625px;transform-origin:23.359375px 0;top:469px;color:#000;transform:scaleX(0.9200)">4.00</div>
<div class="t" style="left:489.96875px;transform-origin:30.03125px 0;top:469px;color:#0000F0;transform:scaleX(0.9200)">£0.00</div>
<div class="t" style="left:569.96875px;transform-origin:30.03125px 0;top:469px;color:#0000F0;transform:scaleX(0.9200)">£6.10</div>
<div class="t" style="left:649.96875px;transform-origin:30.03125px 0;top:469px;color:#0000F0;transform:scaleX(0.9200)">£0.00</div>
<div class="t" style="left:45px;transform-origin:0 0;top:488px;color:#000;transform:scaleX(0.9200)">000680-3</div>
<div class="t" style="left:210px;transform-origin:0 0;top:488px;color:#000;transform:scaleX(0.8662)">Each</div>
<div class="t" style="left:290px;transform-origin:0 0;top:488px;color:#000;transform:scaleX(0.8700)">Each</div>
<div class="t" style="left:416.640625px;transform-origin:23.359375px 0;top:488px;color:#000;transform:scaleX(0.9200)">1.00</div>
<div class="t" style="left:489.96875px;transform-origin:30.03125px 0;top:488px;color:#0000F0;transform:scaleX(0.9200)">£0.00</div>
<div class="t" style="left:569.96875px;transform-origin:30.03125px 0;top:488px;color:#0000F0;transform:scaleX(0.9200)">£9.84</div>
<div class="t" style="left:649.96875px;transform-origin:30.03125px 0;top:488px;color:#0000F0;transform:scaleX(0.9200)">£0.00</div>
<div class="t" style="left:45px;transform-origin:0 0;top:507px;color:#000;transform:scaleX(0.9200)">000681</div>
<div class="t" style="left:210px;transform-origin:0 0;top:507px;color:#000;transform:scaleX(0.8662)">Each</div>
<div class="t" style="left:290px;transform-origin:0 0;top:507px;color:#000;transform:scaleX(0.8700)">Each</div>
<div class="t" style="left:416.640625px;transform-origin:23.359375px 0;top:507px;color:#000;transform:scaleX(0.9200)">1.00</div>
<div class="t" style="left:489.96875px;transform-origin:30.03125px 0;top:507px;color:#0000F0;transform:scaleX(0.9200)">£0.00</div>
<div class="t" style="left:569.96875px;transform-origin:30.03125px 0;top:507px;color:#0000F0;transform:scaleX(0.9200)">£3.85</div>
<div class="t" style="left:649.96875px;transform-origin:30.03125px 0;top:507px;color:#0000F0;transform:scaleX(0.9200)">£0.00</div>
<div class="t" style="left:22px;transform-origin:0 0;top:563px;color:#000;transform:scaleX(0.8643)">9549 Parts Displayed</div>
<div class="t" style="left:624.16px;transform-origin:18.34px 0;top:563px;color:#7E7E88;transform:scaleX(0.8968)">Accept</div>
<div class="t" style="left:715.16px;transform-origin:15.34px 0;top:563px;color:#000;transform:scaleX(0.8212)">Close</div>
</body></html>
